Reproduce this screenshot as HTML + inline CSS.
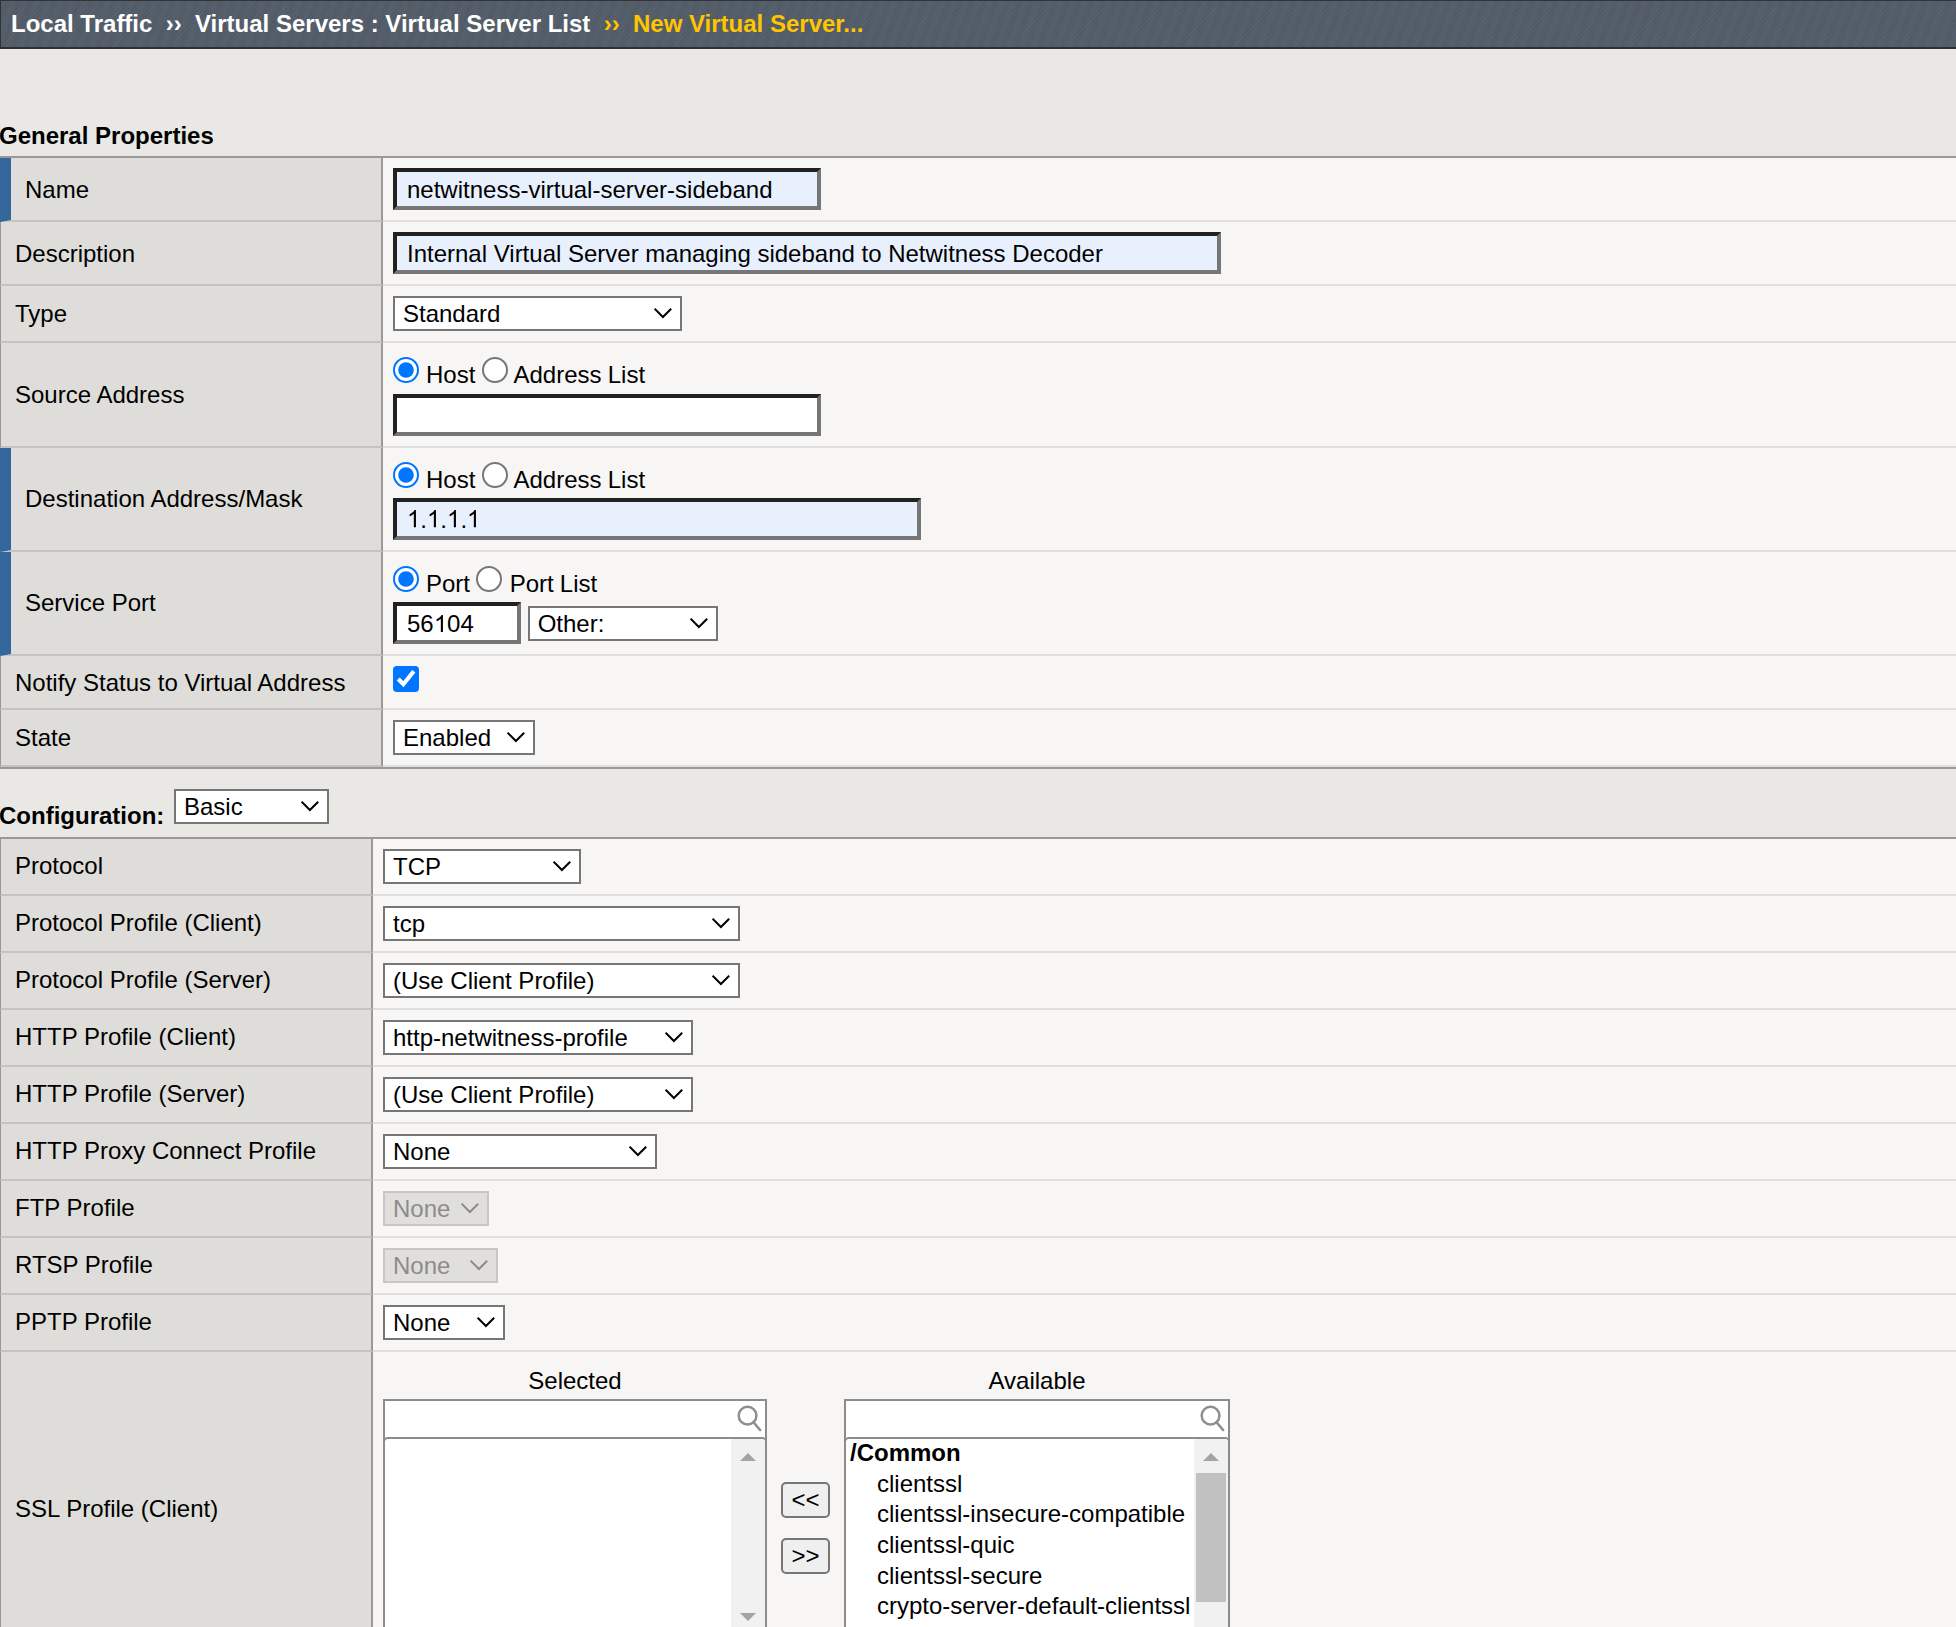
<!DOCTYPE html>
<html>
<head>
<meta charset="utf-8">
<title>New Virtual Server</title>
<style>
html,body{margin:0;padding:0;}
html{background:#e9e8e4;}
body{zoom:2;width:978px;height:813.5px;background:#e9e8e4;
 font-family:"Liberation Sans",sans-serif;font-size:12px;color:#000;}
*{box-sizing:border-box;}
#page{position:relative;width:978px;height:813.5px;overflow:hidden;background:#e9e8e4;}
input,select,button{font-family:"Liberation Sans",sans-serif;font-size:12px;color:#000;margin:0;}
#crumb{position:absolute;left:0;top:0;width:978px;height:24.5px;background-color:#525c68;
 background-image:repeating-linear-gradient(135deg,rgba(255,255,255,.025) 0,rgba(0,0,0,.025) .9px,rgba(255,255,255,.025) 1.8px),repeating-linear-gradient(110deg,rgba(255,255,255,.02) 0,rgba(0,0,0,.02) 2.8px,rgba(255,255,255,.02) 5.6px);
 border-top:.5px solid #333;border-left:.5px solid #333;border-bottom:1px solid #303030;
 color:#fff;font-weight:bold;font-size:12px;line-height:14px;padding:4.5px 0 0 5px;white-space:pre;}
#crumb .y{color:#ffc600;}
#crumb .sep{font-weight:bold;}
h2{position:absolute;margin:0;font-size:12px;font-weight:bold;line-height:14px;left:-.5px;}
table{border-collapse:separate;border-spacing:0;position:absolute;left:0;width:978px;border-top:1px solid #999;border-bottom:1px solid #999;}
td{padding:0;vertical-align:middle;}
td.l{background:#deddd9;border-right:1px solid #999;border-bottom:1px solid #c4c3c0;padding-left:7px;border-left:.5px solid #999;}
td.l.req{border-left:5.5px solid #33669a;}
td.v{background:#f7f6f5;border-bottom:1px solid #dfdfdf;padding-left:5px;}
input[type=text]{border:2px inset #767676;padding:1.5px 5px .5px;height:21px;background:#fff;outline:0;font-size:12px;}
input.af{background:#e8f0fe;}
select{font-size:12px;height:17.5px;border:1px solid #767676;border-radius:0;background-color:#fff;padding:0;}
input[type=radio]{margin:0 3px 0 0;width:13px;height:13px;vertical-align:baseline;}
.rl{height:25.5px;padding-top:7px;line-height:14px;white-space:nowrap;}
td.v.top{vertical-align:top;}
.rl input:first-child{margin-right:3.5px;}
.rl{word-spacing:-.25px;}
input[type=checkbox]{margin:0;width:13px;height:13px;}

select:disabled{background-color:#e1dfdb;border-color:#c8c6c2;color:#8c8c8c;opacity:1;}
.cap{position:absolute;width:100px;text-align:center;line-height:14px;height:14px;}
.box{position:absolute;top:699.5px;height:130px;border:1px solid #8c8c8c;background:#fff;}
.box .lst{position:absolute;left:-1px;right:-1px;top:18px;bottom:-1px;border:1px solid #8c8c8c;border-radius:2.5px 2.5px 0 0;background:#fff;overflow:hidden;}
.box .trk{position:absolute;right:0;top:0;bottom:0;width:17px;background:#f1f1f1;}
.box svg.mag{position:absolute;right:1.5px;top:2px;width:14px;height:14px;}
.tri{position:absolute;left:4.5px;width:0;height:0;border-left:4px solid transparent;border-right:4px solid transparent;}
.tri.up{top:7px;border-bottom:4px solid #a3a3a3;}
.tri.dn{top:87px;border-top:4px solid #a3a3a3;}
.thumb{position:absolute;left:1px;width:15px;top:17px;height:64.5px;background:#c1c1c1;}
.items{position:absolute;left:0;top:-.5px;line-height:15.34px;white-space:nowrap;}
.items b{display:block;padding-left:2px;}
.items span{display:block;padding-left:15.5px;}
button.mv{position:absolute;left:390.5px;width:24.5px;height:18px;padding:0;font-size:12px;line-height:12px;border:1px solid #767676;border-radius:2.5px;background:#efefef;color:#000;text-align:center;}

.sel{display:inline-block;box-sizing:border-box;height:17.5px;border:1px solid #767676;background:#fff;padding:0 0 0 4px;line-height:15.5px;position:relative;vertical-align:baseline;white-space:nowrap;}
.sel svg{position:absolute;right:3px;top:3.5px;width:10px;height:8px;}
.sel svg path{fill:none;stroke:#000;stroke-width:2;}
.sel.dis{background-color:#e1dfdb;border-color:#c8c6c2;color:#8c8c8c;}
.sel.dis svg path{stroke:#8c8c8c;}
#t2 td.l{padding-bottom:1px;}

.inp{display:inline-block;box-sizing:border-box;height:21px;border:2px inset #767676;padding:1.5px 5px .5px;background:#fff;vertical-align:baseline;line-height:15px;white-space:nowrap;}
.inp.af{background:#e8f0fe;}
svg.g1{display:inline-block;width:.55615em;height:.71875em;vertical-align:baseline;fill:#000;}
</style>
</head>
<body>
<div id="page">
<div id="crumb">Local Traffic  <span class="sep">››</span>  Virtual Servers : Virtual Server List  <span class="sep y">››</span>  <span class="y">New Virtual Server...</span></div>

<h2 style="top:61px">General Properties</h2>
<table id="t1" style="top:78px">
<colgroup><col style="width:191.5px"><col></colgroup>
<tr style="height:32px"><td class="l req" style="padding-top:1px">Name</td><td class="v"><input type="text" spellcheck="false" autocomplete="off" class="af" style="width:214px" value="netwitness-virtual-server-sideband"></td></tr>
<tr style="height:32px"><td class="l" style="padding-top:1px">Description</td><td class="v"><input type="text" spellcheck="false" autocomplete="off" class="af" style="width:414px" value="Internal Virtual Server managing sideband to Netwitness Decoder"></td></tr>
<tr style="height:28.5px"><td class="l">Type</td><td class="v"><span class="sel" style="width:144.5px">Standard<svg viewBox="0 0 20 16"><path d="M.6 3.7L8.9 12L17.2 3.7"/></svg></span></td></tr>
<tr style="height:52.5px"><td class="l">Source Address</td><td class="v top"><div class="rl"><input type="radio" checked name="a">Host <input type="radio" name="a">Address List</div><input type="text" spellcheck="false" autocomplete="off" style="width:214px" value=""></td></tr>
<tr style="height:52px"><td class="l req">Destination Address/Mask</td><td class="v top"><div class="rl" style="height:24.75px"><input type="radio" checked name="b">Host <input type="radio" name="b">Address List</div><span class="inp af" style="width:264px"><svg class="g1" viewBox="0 -1472 1139 1472"><path d="M763 0H583V-1147Q518 -1085 412.5 -1023T223 -930V-1104Q374 -1175 487 -1276T647 -1472H763Z"/></svg>.<svg class="g1" viewBox="0 -1472 1139 1472"><path d="M763 0H583V-1147Q518 -1085 412.5 -1023T223 -930V-1104Q374 -1175 487 -1276T647 -1472H763Z"/></svg>.<svg class="g1" viewBox="0 -1472 1139 1472"><path d="M763 0H583V-1147Q518 -1085 412.5 -1023T223 -930V-1104Q374 -1175 487 -1276T647 -1472H763Z"/></svg>.<svg class="g1" viewBox="0 -1472 1139 1472"><path d="M763 0H583V-1147Q518 -1085 412.5 -1023T223 -930V-1104Q374 -1175 487 -1276T647 -1472H763Z"/></svg></span></td></tr>
<tr style="height:52px"><td class="l req">Service Port</td><td class="v top"><div class="rl" style="height:25px"><input type="radio" checked name="c">Port <input type="radio" name="c" style="margin-right:3.75px">Port List</div><span class="inp" style="width:64px">56<svg class="g1" viewBox="0 -1472 1139 1472"><path d="M763 0H583V-1147Q518 -1085 412.5 -1023T223 -930V-1104Q374 -1175 487 -1276T647 -1472H763Z"/></svg>04</span> <span class="sel" style="width:95px">Other:<svg viewBox="0 0 20 16"><path d="M.6 3.7L8.9 12L17.2 3.7"/></svg></span></td></tr>
<tr style="height:27px"><td class="l" style="padding-top:1px">Notify Status to Virtual Address</td><td class="v"><input type="checkbox" checked></td></tr>
<tr style="height:28.5px"><td class="l">State</td><td class="v"><span class="sel" style="width:71px">Enabled<svg viewBox="0 0 20 16"><path d="M.6 3.7L8.9 12L17.2 3.7"/></svg></span></td></tr>
</table>

<h2 style="top:401px">Configuration:</h2>
<span class="sel" style="position:absolute;left:87px;top:394.5px;width:77.5px">Basic<svg viewBox="0 0 20 16"><path d="M.6 3.7L8.9 12L17.2 3.7"/></svg></span>

<table id="t2" style="top:418.5px">
<colgroup><col style="width:186.5px"><col></colgroup>
<tr style="height:28.5px"><td class="l">Protocol</td><td class="v"><span class="sel" style="width:99px">TCP<svg viewBox="0 0 20 16"><path d="M.6 3.7L8.9 12L17.2 3.7"/></svg></span></td></tr>
<tr style="height:28.5px"><td class="l">Protocol Profile (Client)</td><td class="v"><span class="sel" style="width:178.5px">tcp<svg viewBox="0 0 20 16"><path d="M.6 3.7L8.9 12L17.2 3.7"/></svg></span></td></tr>
<tr style="height:28.5px"><td class="l">Protocol Profile (Server)</td><td class="v"><span class="sel" style="width:178.5px">(Use Client Profile)<svg viewBox="0 0 20 16"><path d="M.6 3.7L8.9 12L17.2 3.7"/></svg></span></td></tr>
<tr style="height:28.5px"><td class="l">HTTP Profile (Client)</td><td class="v"><span class="sel" style="width:155px">http-netwitness-profile<svg viewBox="0 0 20 16"><path d="M.6 3.7L8.9 12L17.2 3.7"/></svg></span></td></tr>
<tr style="height:28.5px"><td class="l">HTTP Profile (Server)</td><td class="v"><span class="sel" style="width:155px">(Use Client Profile)<svg viewBox="0 0 20 16"><path d="M.6 3.7L8.9 12L17.2 3.7"/></svg></span></td></tr>
<tr style="height:28.5px"><td class="l">HTTP Proxy Connect Profile</td><td class="v"><span class="sel" style="width:137px">None<svg viewBox="0 0 20 16"><path d="M.6 3.7L8.9 12L17.2 3.7"/></svg></span></td></tr>
<tr style="height:28.5px"><td class="l">FTP Profile</td><td class="v"><span class="sel dis" style="width:53px">None<svg viewBox="0 0 20 16"><path d="M.6 3.7L8.9 12L17.2 3.7"/></svg></span></td></tr>
<tr style="height:28.5px"><td class="l">RTSP Profile</td><td class="v"><span class="sel dis" style="width:57.5px">None<svg viewBox="0 0 20 16"><path d="M.6 3.7L8.9 12L17.2 3.7"/></svg></span></td></tr>
<tr style="height:28.5px"><td class="l">PPTP Profile</td><td class="v"><span class="sel" style="width:61px">None<svg viewBox="0 0 20 16"><path d="M.6 3.7L8.9 12L17.2 3.7"/></svg></span></td></tr>
<tr style="height:157.5px"><td class="l" style="padding-bottom:0">SSL Profile (Client)</td><td class="v"></td></tr>
</table>

<div class="cap" style="left:237.5px;top:683.5px">Selected</div>
<div class="cap" style="left:468.5px;top:683.5px">Available</div>
<div class="box" style="left:191.5px;width:192px">
 <svg class="mag" viewBox="0 0 28 28"><circle cx="13.55" cy="10.7" r="8.85" fill="none" stroke="#8e8e8e" stroke-width="2.5"/><path d="M19.6 17.4 L26.2 25.1" stroke="#8e8e8e" stroke-width="2.4" stroke-linecap="round"/></svg>
 <div class="lst"><div class="trk"><div class="tri up"></div><div class="tri dn"></div></div></div>
</div>
<button class="mv" style="top:741px">&lt;&lt;</button>
<button class="mv" style="top:769px">&gt;&gt;</button>
<div class="box" style="left:422px;width:193px">
 <svg class="mag" viewBox="0 0 28 28"><circle cx="13.55" cy="10.7" r="8.85" fill="none" stroke="#8e8e8e" stroke-width="2.5"/><path d="M19.6 17.4 L26.2 25.1" stroke="#8e8e8e" stroke-width="2.4" stroke-linecap="round"/></svg>
 <div class="lst"><div class="items"><b>/Common</b><span>clientssl</span><span>clientssl-insecure-compatible</span><span>clientssl-quic</span><span>clientssl-secure</span><span>crypto-server-default-clientssl</span><span>splitsession-default-clientssl</span></div><div class="trk"><div class="tri up"></div><div class="thumb"></div></div></div>
</div>
</div>
</body>
</html>
